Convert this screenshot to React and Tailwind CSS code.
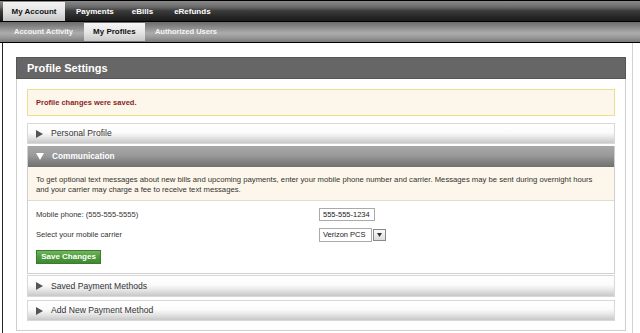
import React from "react";

function TriRight({ color = "#555" }) {
  return (
    <svg width="7" height="8" viewBox="0 0 7 8" className="shrink-0">
      <path d="M0 0 L7 4 L0 8 Z" fill={color} />
    </svg>
  );
}
function TriDown({ color = "#fff" }) {
  return (
    <svg width="8" height="7" viewBox="0 0 8 7" className="shrink-0">
      <path d="M0 0 L8 0 L4 7 Z" fill={color} />
    </svg>
  );
}

function CollapsedRow({ label, h = "h-[21px]" }) {
  return (
    <div
      className={`${h} flex items-center gap-[8px] pl-[8px] border border-[#d8d8d8] bg-[linear-gradient(to_bottom,#ffffff_0%,#fbfbfb_45%,#e6e6e6_70%,#c8c8c8_100%)]`}
    >
      <TriRight />
      <span className="text-[8.6px] text-[#333]">{label}</span>
    </div>
  );
}

export default function App() {
  return (
    <div
      className="w-[640px] h-[333px] overflow-hidden bg-white flex flex-col"
      style={{ fontFamily: '"Liberation Sans", Arial, sans-serif' }}
    >
      {/* top nav */}
      <div className="h-[21px] shrink-0 flex items-end pl-[3px] border-t border-black bg-[linear-gradient(to_bottom,#8a8a8a_0%,#6a6a6a_30%,#3a3a3a_50%,#262626_80%,#1a1a1a_100%)]">
        <div className="w-[62px] h-[19px] flex items-center justify-center text-[8px] font-bold text-[#111] bg-[linear-gradient(to_bottom,#f4f4f4_0%,#e4e4e4_50%,#c4c4c4_100%)]">
          My Account
        </div>
        <div className="h-[19px] flex items-center text-[8px] font-bold text-white">
          <span className="ml-[11px]">Payments</span>
          <span className="ml-[18px]">eBills</span>
          <span className="ml-[21px]">eRefunds</span>
        </div>
      </div>
      {/* second nav */}
      <div className="h-[22px] shrink-0 flex items-center pl-[4px] border-t border-b border-black bg-[linear-gradient(to_bottom,#6a6a6a_0%,#8e8e8e_30%,#acacac_55%,#9a9a9a_75%,#7a7a7a_100%)]">
        <span className="ml-[10px] text-[7.5px] font-bold text-[#f4f4f4]">Account Activity</span>
        <div className="ml-[11px] w-[61px] h-[18px] flex items-center justify-center text-[8px] font-bold text-[#111] bg-[linear-gradient(to_bottom,#f6f6f6_0%,#e6e6e6_50%,#c8c8c8_100%)]">
          My Profiles
        </div>
        <span className="ml-[10px] text-[7.5px] font-bold text-[#f4f4f4]">Authorized Users</span>
      </div>

      {/* content */}
      <div className="flex-1 ml-[2px] mr-[7px] border-l border-[#222] border-r border-r-[#d0d0d0] pl-[13px] pr-[5px] pt-[14px]">
        <div className="w-[610px]">
          <div className="h-[22px] flex items-center pl-[10px] bg-[#666] border border-[#555]">
            <span className="text-[11px] font-bold text-white">Profile Settings</span>
          </div>
          <div className="h-[252px] border border-t-0 border-[#cfcfcf] px-[10px] pt-[10px]">
            <div className="h-[27px] flex items-center pl-[8px] border border-[#ece08a] bg-[#fdf6ea]">
              <span className="text-[7.5px] font-bold text-[#8a1f1f]">Profile changes were saved.</span>
            </div>
            <div className="mt-[7px]">
              <CollapsedRow label="Personal Profile" />
            </div>
            {/* communication */}
            <div className="mt-[2px] border-l border-r border-b border-[#cfcfcf]">
              <div className="h-[21px] flex items-center gap-[8px] pl-[8px] bg-[linear-gradient(to_bottom,#a8a8a8_0%,#9a9a9a_45%,#858585_70%,#707070_100%)]">
                <TriDown />
                <span className="text-[8.3px] font-bold text-white">Communication</span>
              </div>
              <div className="h-[34px] bg-[#fdf6ea] border-b border-[#e0dcd0] pl-[8px] pt-[8px] text-[7.7px] leading-[10px] text-[#333] whitespace-nowrap">
                To get optional text messages about new bills and upcoming payments, enter your mobile phone number and carrier. Messages may be sent during overnight hours
                <br />
                and your carrier may charge a fee to receive text messages.
              </div>
              <div className="h-[72px] pl-[8px] pt-[7px] bg-white">
                <div className="flex items-center h-[13px]">
                  <span className="w-[283px] text-[7.6px] text-[#333]">Mobile phone: (555-555-5555)</span>
                  <div className="w-[56px] h-[13px] border border-[#aaa] flex items-center pl-[3px] text-[7.5px] text-[#222]">
                    555-555-1234
                  </div>
                </div>
                <div className="flex items-center h-[14px] mt-[7px]">
                  <span className="w-[283px] text-[7.6px] text-[#333]">Select your mobile carrier</span>
                  <div className="w-[53px] h-[14px] border border-[#aaa] flex items-center pl-[3px] text-[7.5px] text-[#222]">
                    Verizon PCS
                  </div>
                  <div className="ml-[1px] w-[13px] h-[12px] border border-[#888] bg-[linear-gradient(to_bottom,#fafafa,#dcdcdc)] flex items-center justify-center">
                    <svg width="5" height="4" viewBox="0 0 5 4">
                      <path d="M0 0 L5 0 L2.5 4 Z" fill="#333" />
                    </svg>
                  </div>
                </div>
                <div className="mt-[8px] w-[65px] h-[14px] flex items-center justify-center border border-[#3c7a2e] bg-[linear-gradient(to_bottom,#6fb55c_0%,#4f9a3e_50%,#3f8a30_100%)] text-[8px] font-bold text-white">
                  Save Changes
                </div>
              </div>
            </div>
            <div className="mt-[1px]">
              <CollapsedRow label="Saved Payment Methods" h="h-[22px]" />
            </div>
            <div className="mt-[3px]">
              <CollapsedRow label="Add New Payment Method" />
            </div>
          </div>
        </div>
      </div>
    </div>
  );
}
